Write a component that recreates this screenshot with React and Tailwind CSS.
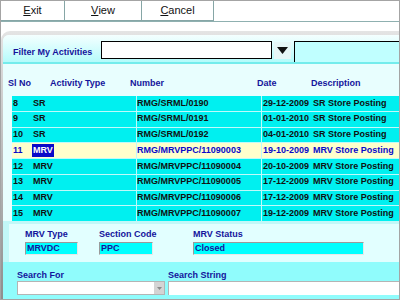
const ROWS = [
  { no: 8, type: 'SR', number: 'RMG/SRML/0190', date: '29-12-2009', desc: 'SR Store Posting' },
  { no: 9, type: 'SR', number: 'RMG/SRML/0191', date: '01-01-2010', desc: 'SR Store Posting' },
  { no: 10, type: 'SR', number: 'RMG/SRML/0192', date: '04-01-2010', desc: 'SR Store Posting' },
  { no: 11, type: 'MRV', number: 'RMG/MRVPPC/11090003', date: '19-10-2009', desc: 'MRV Store Posting', selected: true },
  { no: 12, type: 'MRV', number: 'RMG/MRVPPC/11090004', date: '20-10-2009', desc: 'MRV Store Posting' },
  { no: 13, type: 'MRV', number: 'RMG/MRVPPC/11090005', date: '17-12-2009', desc: 'MRV Store Posting' },
  { no: 14, type: 'MRV', number: 'RMG/MRVPPC/11090006', date: '17-12-2009', desc: 'MRV Store Posting' },
  { no: 15, type: 'MRV', number: 'RMG/MRVPPC/11090007', date: '19-12-2009', desc: 'MRV Store Posting' },
];

function ToolButton({ label, width }) {
  // first letter underlined, like a mnemonic key
  return (
    <div className={`${width} h-full flex items-center justify-center border-r border-b border-[#86a6a6] text-[11px] text-[#111]`}>
      <span className="underline underline-offset-1">{label[0]}</span>
      {label.slice(1)}
    </div>
  );
}

export default function App() {
  return (
    <div className="w-[400px] h-[300px] border border-[#a4a4a4] bg-white overflow-hidden flex flex-col font-['Liberation_Sans',Arial,sans-serif]">

      {/* Toolbar */}
      <div className="h-[21px] flex border-b border-[#8fb0b0] shrink-0">
        <ToolButton label="Exit" width="w-[64px]" />
        <ToolButton label="View" width="w-[77px]" />
        <ToolButton label="Cancel" width="w-[72px]" />
      </div>

      {/* Activities panel */}
      <div className="mt-[9px] flex-1 flex flex-col rounded-tl-[9px] overflow-hidden bg-gradient-to-b from-[#e4e4e4] to-[#8e8e8e] pt-[4px] pl-[2px]">
        <div className="flex-1 flex flex-col rounded-tl-[6px] overflow-hidden bg-[#e8fefe]">

          {/* Filter row */}
          <div className="h-[29px] shrink-0 flex items-end bg-gradient-to-b from-[#f4ffff] to-[#b4fbfb] border-b-2 border-[#74ecec]">
            <span className="w-[98px] pl-[10px] mb-[5px] text-[9px] leading-[10px] font-bold text-[#14149c] whitespace-nowrap">Filter My Activities</span>
            <div className="w-[171px] h-[18px] mb-[3px] bg-white border border-black" />
            <div className="ml-[2px] mb-[3px] w-[17px] h-[17px] bg-[#e6f6f6] flex items-center justify-center">
              <svg width="11" height="7" viewBox="0 0 11 7"><path d="M0 0H11L5.5 7Z" fill="#111" /></svg>
            </div>
            <div className="ml-[3px] flex-1 h-[21px] bg-[#c0ffff] border-t border-l border-black" />
          </div>

          {/* Header */}
          <div className="h-[32px] shrink-0 flex pt-[14px] pl-[5px] text-[9px] font-bold text-[#14149c] leading-[10px] whitespace-nowrap">
            <span className="w-[42px]">Sl No</span>
            <span className="w-[80px]">Activity Type</span>
            <span className="w-[127px]">Number</span>
            <span className="w-[54px]">Date</span>
            <span>Description</span>
          </div>

          {/* Rows */}
          <div className="ml-[9px] h-[125px] shrink-0 grid grid-rows-8 gap-px bg-[#bffafa] text-[9px] font-bold whitespace-nowrap">
            {ROWS.map((r) => (
              <div key={r.no} className={`flex gap-px ${r.selected ? 'text-[#0a0ac8]' : 'text-[#111]'}`}>
                <div className={`w-[124px] flex items-center ${r.selected ? 'bg-[#ffffcc]' : 'bg-[#00f0f0]'}`}>
                  <span className="w-[21px] pl-[1px]">{r.no}</span>
                  <span className={r.selected ? 'bg-[#0a0ac8] text-white px-[1px] -ml-[1px]' : ''}>{r.type}</span>
                </div>
                <div className={`w-[124px] flex items-center overflow-hidden ${r.selected ? 'bg-[#ffffcc]' : 'bg-[#00f0f0]'}`}>
                  {r.number}
                </div>
                <div className={`flex-1 flex items-center overflow-hidden ${r.selected ? 'bg-[#ffffcc]' : 'bg-[#00f0f0]'}`}>
                  <span className="w-[51px] pl-[1px]">{r.date}</span>
                  <span>{r.desc}</span>
                </div>
              </div>
            ))}
          </div>

          {/* MRV details */}
          <div className="shrink-0 bg-[#c2f8f8] pt-[3px] -ml-[2px]">
            <div className="ml-[8px] h-[38px] bg-[#e2ffff] flex pt-[5px] text-[9px] font-bold text-[#14149c] whitespace-nowrap">
              <div className="ml-[16px] w-[74px] flex flex-col gap-[3px]">
                <span className="leading-[10px]">MRV Type</span>
                <div className="w-[53px] h-[13px] bg-[#00ffff] border border-[#9a9a9a] border-r-[#e8e8e8] border-b-[#e8e8e8] px-[1px] leading-[11px]">MRVDC</div>
              </div>
              <div className="w-[94px] flex flex-col gap-[3px]">
                <span className="leading-[10px]">Section Code</span>
                <div className="w-[54px] h-[13px] bg-[#00ffff] border border-[#9a9a9a] border-r-[#e8e8e8] border-b-[#e8e8e8] px-[1px] leading-[11px]">PPC</div>
              </div>
              <div className="flex flex-col gap-[3px]">
                <span className="leading-[10px]">MRV Status</span>
                <div className="w-[171px] h-[13px] bg-[#00ffff] border border-[#9a9a9a] border-r-[#e8e8e8] border-b-[#e8e8e8] px-[1px] leading-[11px]">Closed</div>
              </div>
            </div>
          </div>

          {/* Search */}
          <div className="flex-1 -ml-[2px] bg-[#90fcfc] flex pt-[8px] text-[9px] font-bold text-[#14149c] whitespace-nowrap">
            <div className="ml-[16px] w-[151px] flex flex-col gap-[1px]">
              <span className="leading-[10px]">Search For</span>
              <div className="w-[148px] h-[14px] bg-white border border-[#b4b4b4] flex justify-end">
                <div className="w-[10px] h-full bg-[#d4d4d4] flex items-center justify-center">
                  <svg width="5" height="3" viewBox="0 0 5 3"><path d="M0 0H5L2.5 3Z" fill="#8a8a8a" /></svg>
                </div>
              </div>
            </div>
            <div className="flex-1 flex flex-col gap-[1px]">
              <span className="leading-[10px]">Search String</span>
              <div className="h-[14px] bg-white border-t border-l border-[#b4b4b4]" />
            </div>
          </div>
        </div>
      </div>
    </div>
  );
}
